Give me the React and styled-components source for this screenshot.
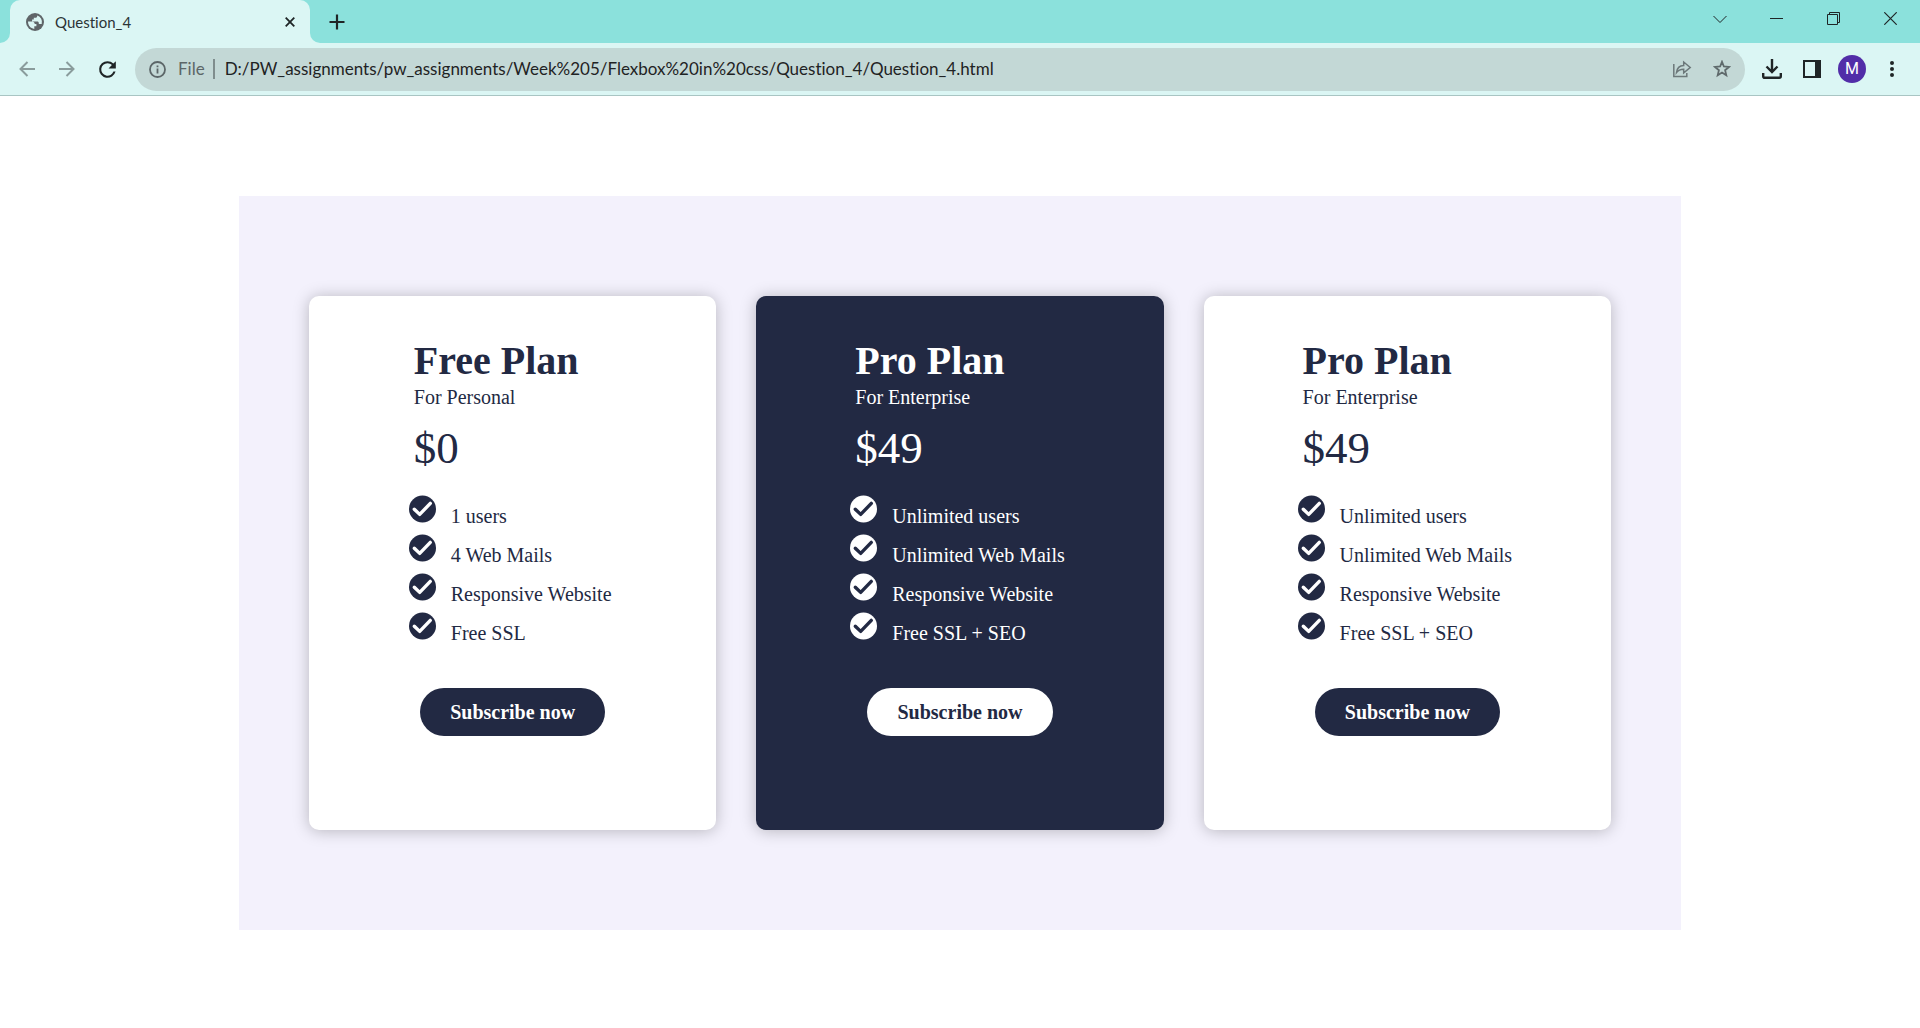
import React from "react";
import styled, { createGlobalStyle } from "styled-components";

const navy = "#222943";
const serif = '"Liberation Serif", "Times New Roman", serif';
const sans = 'Lato, "Open Sans", sans-serif';

const GlobalStyle = createGlobalStyle`
  *, *::before, *::after { box-sizing: border-box; }
  body { margin: 0; background: #fff; font-family: ${serif}; }
  h2, p, ul { margin: 0; padding: 0; }
  button { border: 0; padding: 0; background: none; cursor: pointer; }
`;

/* ---------- browser frame ---------- */

const Frame = styled.header`
  font-family: ${sans};
  font-variant-ligatures: none;
  border-bottom: 1px solid #a9c5c3;
`;

const TabStrip = styled.div`
  display: flex;
  height: 43px;
  background: #8be1dc;
`;

const TabEdge = styled.div`
  width: 10px;
  background: #dbf6f4;
  &::before {
    content: "";
    display: block;
    height: 100%;
    background: #8be1dc;
    border-radius: ${(p) => (p.$side === "left" ? "0 0 10px 0" : "0 0 0 10px")};
  }
`;

const Tab = styled.div`
  display: flex;
  align-items: center;
  width: 300px;
  padding: 0 10px 0 16px;
  background: #dbf6f4;
  border-radius: 10px 10px 0 0;
  color: #2c3436;
`;

const TabTitle = styled.span`
  flex: 1;
  margin-left: 11px;
  font-size: 15px;
  line-height: 20px;
`;

const IconButton = styled.button`
  display: flex;
  align-items: center;
  justify-content: center;
  flex: none;
  width: ${(p) => p.$w || 40}px;
  height: ${(p) => p.$h || 40}px;
  color: ${(p) => p.$color || "#1f2526"};
`;

const WindowControls = styled.div`
  display: flex;
  margin-left: auto;
  padding-right: 1px;
`;

const Toolbar = styled.div`
  display: flex;
  align-items: center;
  height: 52px;
  padding: 0 8px 0 7px;
  background: #dbf6f4;
`;

const AddressBar = styled.label`
  display: flex;
  align-items: center;
  flex: 1;
  height: 43px;
  margin: 0 7px 0 8px;
  padding: 0 3px 0 14px;
  border-radius: 22px;
  background: #c3d8d6;
  color: #5c6668;
  font-size: 17px;
`;

const Scheme = styled.span`
  margin-left: 12px;
  padding-right: 8px;
  border-right: 2px solid #7f8d8d;
  line-height: 20px;
`;

const Address = styled.input`
  flex: 1;
  min-width: 0;
  margin-left: 10px;
  padding: 0;
  border: 0;
  outline: 0;
  background: transparent;
  color: #1f2324;
  font: 17px/24px ${sans};
  font-variant-ligatures: none;
`;

const Avatar = styled.span`
  display: flex;
  align-items: center;
  justify-content: center;
  width: 28px;
  height: 28px;
  border-radius: 50%;
  background: #512da8;
  color: #fff;
  font: 16px/28px Roboto, sans-serif;
`;

/* ---------- pricing page ---------- */

const Page = styled.main`
  padding: 100px 239px;
`;

const Plans = styled.section`
  display: flex;
  gap: 40px;
  padding: 100px 70px;
  background: #f3f1fc;
`;

const Card = styled.article`
  flex: 1;
  display: flex;
  flex-direction: column;
  align-items: center;
  padding: 40px 40px 94px;
  border-radius: 10px;
  background: ${(p) => (p.$dark ? navy : "#fff")};
  color: ${(p) => (p.$dark ? "#fff" : navy)};
  box-shadow: 0 1px 16px rgba(0, 0, 0, 0.25);
`;

const PlanName = styled.h2`
  font-size: 40px;
  line-height: 50px;
`;

const Audience = styled.p`
  font-size: 20px;
  line-height: 22px;
`;

const Price = styled.p`
  padding: 14px 0;
  font-size: 45px;
  line-height: 52px;
`;

const Features = styled.ul`
  padding-top: 7px;
  list-style: none;
`;

const Feature = styled.li`
  display: flex;
  align-items: flex-start;
  gap: 14px;
  margin-left: -5px;
  height: 39px;
  font-size: 20px;
  line-height: 42px;
  svg { flex: none; }
`;

const Subscribe = styled.button`
  && {
    margin-top: 37px;
    padding: 0 30px;
    border-radius: 24px;
    background: ${(p) => (p.$dark ? "#fff" : navy)};
    color: ${(p) => (p.$dark ? navy : "#fff")};
    font: bold 20px/48px ${serif};
  }
`;

function Check({ dark }) {
  return (
    <svg width="28" height="28" viewBox="0 0 28 28" aria-hidden="true">
      <circle cx="13.5" cy="14" r="13.5" fill={dark ? "#fff" : navy} />
      <path d="M5.300 14.200 10.700 19.400 21.300 8.400" fill="none" stroke={dark ? navy : "#fff"} strokeWidth="3.4" strokeLinecap="round" strokeLinejoin="round" />
    </svg>
  );
}

function Stroke({ size, d, width = 2, children, box = size }) {
  return (
    <svg width={size} height={size} viewBox={`0 0 ${box} ${box}`} fill="none" stroke="currentColor" strokeWidth={width} aria-hidden="true">
      {d && <path d={d} />}
      {children}
    </svg>
  );
}

function Solid({ size, d }) {
  return (
    <svg width={size} height={size} viewBox="0 0 24 24" fill="currentColor" aria-hidden="true">
      <path d={d} />
    </svg>
  );
}

const plans = [
  { id: "free", name: "Free Plan", audience: "For Personal", price: "$0", features: ["1 users", "4 Web Mails", "Responsive Website", "Free SSL"] },
  { id: "pro", dark: true, name: "Pro Plan", audience: "For Enterprise", price: "$49", features: ["Unlimited users", "Unlimited Web Mails", "Responsive Website", "Free SSL + SEO"] },
  { id: "pro-light", name: "Pro Plan", audience: "For Enterprise", price: "$49", features: ["Unlimited users", "Unlimited Web Mails", "Responsive Website", "Free SSL + SEO"] },
];

function Browser() {
  return (
    <Frame>
      <TabStrip>
        <TabEdge $side="left" />
        <Tab>
          <svg width="18" height="18" viewBox="0 0 18 18" aria-hidden="true">
            <circle cx="9" cy="9" r="9" fill="#5f6568" />
            <path d="M2 8.600h3.700c2 0 3 .9 3 2.400h1.700v2.300H8.300v2.600C4.600 15.700 2 12.500 2 8.600zM11.300 2.400c0 1.400-.8 2.300-2 2.300H7.800v1.900H6.100v1.900h5.100c1.100 0 1.600.6 1.600 1.500v.9h2.900A7 7 0 0 0 11.300 2.400z" fill="#dbf6f4" />
          </svg>
          <TabTitle>Question_4</TabTitle>
          <IconButton $w={20} $h={20} aria-label="Close tab"><Stroke size={10} width={1.800} d="M.7.7 9.300 9.300M9.300.7.7 9.300" /></IconButton>
        </Tab>
        <TabEdge $side="right" />
        <IconButton $w={34} $h={43} aria-label="New tab"><Stroke size={16} width={2.200} d="M8 .5v15M.5 8h15" /></IconButton>
        <WindowControls>
          <IconButton $w={57} $h={37} aria-label="Search tabs"><Stroke size={14} width={1} d="M.5 4 7 10.500 13.500 4" /></IconButton>
          <IconButton $w={57} $h={37} aria-label="Minimize"><Stroke size={13} width={1} d="M0 6.500h13" /></IconButton>
          <IconButton $w={57} $h={37} aria-label="Restore"><Stroke size={13} width={1} d="M.5 2.500h10v10H.5zM2.500 2.500v-2h10v10h-2" /></IconButton>
          <IconButton $w={57} $h={37} aria-label="Close window"><Stroke size={13} width={1.200} d="M.3.3l12.400 12.400M12.700.3.3 12.700" /></IconButton>
        </WindowControls>
      </TabStrip>
      <Toolbar>
        <IconButton $color="#8a9c9c" aria-label="Back"><Stroke size={16} d="M16 8H1.500M8.500 1 1.500 8l7 7" /></IconButton>
        <IconButton $color="#8a9c9c" aria-label="Forward"><Stroke size={16} d="M0 8h14.500M7.500 1l7 7-7 7" /></IconButton>
        <IconButton aria-label="Reload"><Solid size={25} d="M17.650 6.350A7.960 7.960 0 0 0 12 4a8 8 0 1 0 7.730 10h-2.080A6 6 0 1 1 12 6c1.660 0 3.140.69 4.220 1.780L13 11h7V4z" /></IconButton>
        <AddressBar>
          <Stroke size={17} width={1.800}><circle cx="8.500" cy="8.500" r="7.500" /><path d="M8.500 7.500v5M8.500 4.500v1.800" /></Stroke>
          <Scheme>File</Scheme>
          <Address aria-label="Address" defaultValue="D:/PW_assignments/pw_assignments/Week%205/Flexbox%20in%20css/Question_4/Question_4.html" />
          <IconButton $color="#6c787a" aria-label="Share"><Stroke size={20} width={1.500} d="M1.800 5v12.500h13V14M4.500 13.500c.5-4.500 3-6.800 7.200-7V3l6.500 5.500-6.500 5.300v-3.500c-3.200 0-5.500.9-7.200 3.200z" /></IconButton>
          <IconButton $color="#5f6a6c" aria-label="Bookmark"><Stroke size={18} width={1.800} d="M9 1.800 10.900 6.500 16 6.900 12.100 10.200 13.300 15.200 9 12.500 4.700 15.200 5.900 10.200 2 6.900 7.100 6.500z" /></IconButton>
        </AddressBar>
        <IconButton aria-label="Downloads"><Stroke size={20} width={2.400} d="M10 0v12M4.500 7.500l5.500 5.500 5.500-5.500M1.200 14v3.200q0 1.600 1.600 1.600h14.400q1.600 0 1.600-1.600V14" /></IconButton>
        <IconButton aria-label="Side panel"><Stroke size={18}><path d="M1 1h16v16H1z" /><path d="M12 2h5v14h-5z" fill="currentColor" stroke="none" /></Stroke></IconButton>
        <IconButton aria-label="Profile"><Avatar>M</Avatar></IconButton>
        <IconButton aria-label="Menu"><Solid size={24} d="M12 8a2 2 0 1 0 0-4 2 2 0 0 0 0 4zm0 2a2 2 0 1 0 0 4 2 2 0 0 0 0-4zm0 6a2 2 0 1 0 0 4 2 2 0 0 0 0-4z" /></IconButton>
      </Toolbar>
    </Frame>
  );
}

export default function App() {
  return (
    <>
      <GlobalStyle />
      <Browser />
      <Page>
        <Plans>
          {plans.map((plan) => (
            <Card key={plan.id} $dark={plan.dark}>
              <div>
                <PlanName>{plan.name}</PlanName>
                <Audience>{plan.audience}</Audience>
                <Price>{plan.price}</Price>
                <Features>
                  {plan.features.map((feature) => (
                    <Feature key={feature}><Check dark={plan.dark} />{feature}</Feature>
                  ))}
                </Features>
              </div>
              <Subscribe $dark={plan.dark}>Subscribe now</Subscribe>
            </Card>
          ))}
        </Plans>
      </Page>
    </>
  );
}
